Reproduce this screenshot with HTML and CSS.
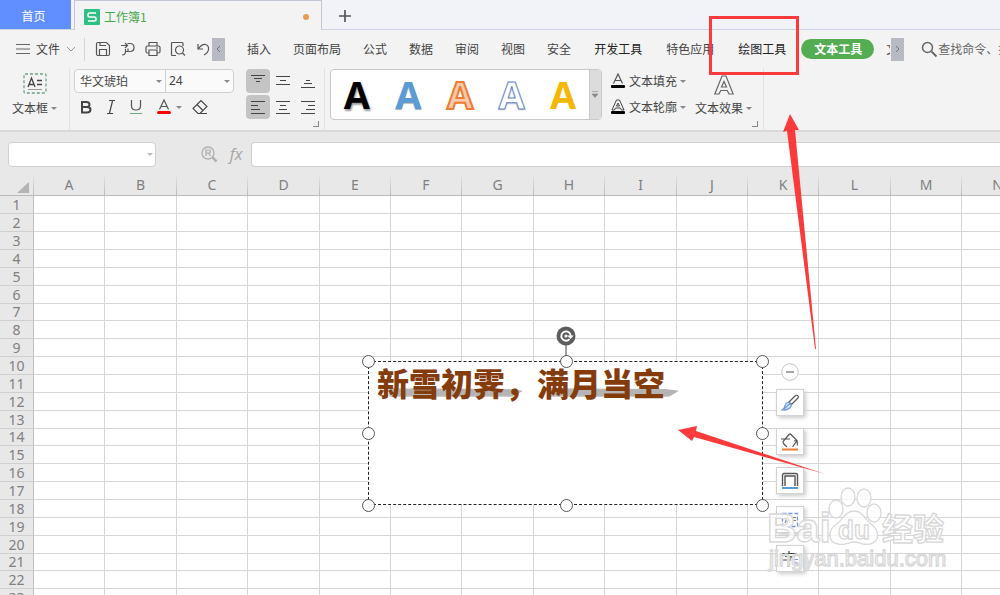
FILE: index.html
```html
<!DOCTYPE html>
<html lang="zh-CN">
<head>
<meta charset="utf-8">
<meta name="viewport" content="width=device-width, initial-scale=1">
<title>工作簿1</title>
<link rel="stylesheet" href="styles.css">
</head>
<body>
<nav class="tabs">
  <button class="tab-home">首页</button>
  <button class="tab-doc">
    <svg class="logo" width="16" height="16" viewBox="0 0 16 16"><rect width="16" height="16" rx="1" fill="#2fc184"/><path d="M12 4H5.500Q4 4 4 6T5.500 8H10.500Q12 8 12 10T10.500 12H4" fill="none" stroke="#fff" stroke-width="1.600"/></svg>
    <span class="tab-name">工作簿1</span>
    <span class="unsaved"></span>
  </button>
  <button class="tab-add" aria-label="新建"><svg width="14" height="14" viewBox="0 0 14 14"><path d="M7 1V13M1 7H13" stroke="#555" stroke-width="1.700"/></svg></button>
</nav>

<div class="menubar">
  <button class="file-menu">
    <svg width="14" height="12" viewBox="0 0 14 12"><path d="M0 1.500H14M0 6H14M0 10.500H14" stroke="#666"/></svg>
    <span>文件</span>
    <svg width="10" height="6" viewBox="0 0 10 6"><path d="M1 1L5 5L9 1" fill="none" stroke="#999"/></svg>
  </button>
  <div class="quick">
    <button aria-label="保存"><svg width="16" height="16" viewBox="0 0 16 16"><path d="M1.500 3Q1.500 1.500 3 1.500H11.500L14.500 4.500V13Q14.500 14.500 13 14.500H3Q1.500 14.500 1.500 13ZM4.500 14V8.500H11.500V14M5 1.500V4.500H11"/></svg></button>
    <button aria-label="输出"><svg width="16" height="16" viewBox="0 0 16 16"><path d="M1 4.500H7M5 2L7.500 4.500L5 7M7.500 2.500H10Q14 2.500 14 6.500T10 10.500H5.500V8M5.500 10.500Q5.500 14 2 14M8 10.500V7.500"/></svg></button>
    <button aria-label="打印"><svg width="16" height="16" viewBox="0 0 16 16"><path d="M4 5V1.500H12V5M4 12H2.500Q1 12 1 10.500V6.500Q1 5 2.500 5H13.500Q15 5 15 6.500V10.500Q15 12 13.500 12H12M4 9H12V14.500H4ZM11 7H13"/></svg></button>
    <button aria-label="打印预览"><svg width="16" height="16" viewBox="0 0 16 16"><path d="M6 14.500H2.500Q1.500 14.500 1.500 13.500V2.500Q1.500 1.500 2.500 1.500H12Q13 1.500 13 2.500V5M12.500 12L15 14.500"/><circle cx="9.500" cy="9" r="4"/></svg></button>
    <button aria-label="撤销"><svg width="16" height="16" viewBox="0 0 16 16"><path d="M3 3V8H8M3.500 7.500Q7 3 10.500 3.500Q14 4.500 13.500 8.500Q13 12 9 14"/></svg></button>
  </div>
  <button class="scroller" aria-label="向左"><svg width="5" height="8" viewBox="0 0 5 8"><path d="M4 1L1 4L4 7" fill="none" stroke="#777"/></svg></button>
  <div class="menu">
    <button>插入</button><button>页面布局</button><button>公式</button><button>数据</button><button>审阅</button><button>视图</button><button>安全</button><button class="wide strong">开发工具</button><button class="wide">特色应用</button><button class="wide strong">绘图工具</button>
  </div>
  <button class="pill">文本工具</button>
  <button class="clipped"><span>文</span></button>
  <button class="scroller" aria-label="向右"><svg width="5" height="8" viewBox="0 0 5 8"><path d="M1 1L4 4L1 7" fill="none" stroke="#777"/></svg></button>
  <label class="search">
    <svg width="17" height="17" viewBox="0 0 17 17"><circle cx="6.500" cy="6.500" r="5" fill="none" stroke="#666" stroke-width="1.500"/><path d="M10.500 10.500L15.500 15.500" stroke="#666" stroke-width="1.800"/></svg>
    <input type="text" placeholder="查找命令、搜索模板" aria-label="查找命令">
  </label>
</div>

<div class="ribbon">
  <button class="textbox-btn">
    <svg width="24" height="22" viewBox="0 0 24 22"><rect x="1" y="1" width="22" height="19" rx="1" fill="none" stroke="#6fa384" stroke-width="1.300" stroke-dasharray="3 2"/><path d="M5 14L8.500 5L12 14M6 11.500H11M14 7.500H19M14 11.500H19" fill="none" stroke="#444" stroke-width="1.300"/><path d="M5 16.500H19" stroke="#999"/></svg>
    <span class="drop">文本框</span>
  </button>

  <div class="group font-group">
    <div class="font-row">
      <label class="combo combo-name"><select aria-label="字体"><option>华文琥珀</option></select></label>
      <label class="combo combo-size"><select aria-label="字号"><option>24</option></select></label>
    </div>
    <div class="format-row">
      <button aria-label="加粗"><svg width="14" height="16" viewBox="0 0 14 16"><path d="M3 3H7.500Q10.500 3 10.500 5.500T7.500 8H3ZM3 8H8Q11.500 8 11.500 10.700T8 13.500H3Z" fill="none" stroke="#444" stroke-width="2"/></svg></button>
      <button aria-label="倾斜"><svg width="14" height="16" viewBox="0 0 14 16"><path d="M5 1.500H11M3 14.500H9M8.500 2L5.500 14" fill="none" stroke="#444" stroke-width="1.200"/></svg></button>
      <button aria-label="下划线"><svg width="14" height="16" viewBox="0 0 14 16"><path d="M2.500 1V7Q2.500 11 7 11T11.500 7V1" fill="none" stroke="#555" stroke-width="1.200"/><path d="M1 14.500H13" stroke="#6fa384"/></svg></button>
      <button class="drop color-btn" aria-label="字体颜色"><svg width="14" height="16" viewBox="0 0 14 16"><path d="M2.500 10.500L7 1L11.500 10.500M4 7.500H10" fill="none" stroke="#555" stroke-width="1.200"/><rect x="0" y="12" width="14" height="3" rx="1.500" fill="#f00"/></svg></button>
      <button aria-label="清除格式"><svg width="16" height="16" viewBox="0 0 16 16"><path d="M1 9.500L9 1.500L15 7.500L8 14.500H6ZM5 5.500L11 11.500M7 14.500H15" fill="none" stroke="#444" stroke-width="1.100"/></svg></button>
    </div>
  </div>

  <div class="group align-group">
    <button class="on" aria-label="顶端对齐"><svg width="14" height="14" viewBox="0 0 14 14"><path d="M0 1.500H14M3 4.500H11M5 7.500H9"/></svg></button>
    <button aria-label="垂直居中"><svg width="14" height="14" viewBox="0 0 14 14"><path d="M0 2.500H14M4 6.500H10M0 10.500H14"/></svg></button>
    <button aria-label="底端对齐"><svg width="14" height="14" viewBox="0 0 14 14"><path d="M5 6.500H9M3 9.500H11M0 13.500H14"/></svg></button>
    <button class="on" aria-label="左对齐"><svg width="14" height="14" viewBox="0 0 14 14"><path d="M0 1.500H14M0 5.500H7M0 9.500H9M0 13.500H14"/></svg></button>
    <button aria-label="居中"><svg width="14" height="14" viewBox="0 0 14 14"><path d="M0 1.500H14M4 5.500H10M3 9.500H11M0 13.500H14"/></svg></button>
    <button aria-label="右对齐"><svg width="14" height="14" viewBox="0 0 14 14"><path d="M0 1.500H14M7 5.500H14M5 9.500H14M0 13.500H14"/></svg></button>
  </div>

  <div class="group art-group">
    <div class="gallery">
      <button class="art art-black">A</button>
      <button class="art art-blue">A</button>
      <button class="art art-orange">A</button>
      <button class="art art-outline">A</button>
      <button class="art art-gold">A</button>
      <button class="gallery-more" aria-label="更多"><svg width="6" height="7" viewBox="0 0 6 7"><path d="M0 .5H6M0 3H6L3 6.500Z" fill="#888" stroke="#888" stroke-width=".6"/></svg></button>
    </div>
    <div class="fill-col">
      <button class="drop"><svg width="14" height="16" viewBox="0 0 14 16"><path d="M2.500 10.500L7 1L11.500 10.500M4 7.500H10" fill="none" stroke="#555" stroke-width="1.200"/><rect y="12" width="14" height="3" rx="1"/></svg>文本填充</button>
      <button class="drop"><svg width="14" height="16" viewBox="0 0 14 16"><path d="M1 11L5.500 1H8.500L13 11H10.500L9.500 9H4.500L3.500 11ZM5.500 7H8.500L7 4Z" fill="none" stroke="#444"/><rect y="12" width="14" height="3" rx="1"/></svg>文本轮廓</button>
    </div>
    <button class="effect-btn">
      <svg width="20" height="20" viewBox="0 0 20 20"><path d="M.8 19L8 1H12L19.200 19H15L13.300 15.500H6.700L5 19ZM7.500 12H12.500L10 6.500Z" fill="none" stroke="#666" stroke-width="1.200"/></svg>
      <span class="drop">文本效果</span>
    </button>
  </div>
</div>

<div class="formula">
  <label class="combo name-box"><input type="text" aria-label="名称框"></label>
  <button class="find" aria-label="浏览"><svg width="17" height="17" viewBox="0 0 17 17"><circle cx="7" cy="7" r="6" fill="none" stroke="#b0b0b0" stroke-width="1.300"/><path d="M5 10V4H8Q9.500 4 9.500 5.500T8 7H5M7.500 7L9.500 10" fill="none" stroke="#aaa" stroke-width="1.200"/><path d="M11.500 11.500L15.500 15.500" stroke="#b0b0b0" stroke-width="2.500"/></svg></button>
  <button class="fx" aria-label="插入函数">fx</button>
  <input class="formula-input" type="text" aria-label="编辑栏">
</div>

<main class="sheet">
  <table class="grid">
    <thead><tr><th class="corner"><svg width="12" height="11" viewBox="0 0 12 11"><path d="M12 0V11H0Z" fill="#b4b4b4"/></svg></th></tr></thead>
    <tbody></tbody>
  </table>

  <div class="shape">
    <p class="word-art"><span>新雪初霁，</span><span>满月当空</span></p>
    <i class="handle tl"></i><i class="handle tc"></i><i class="handle tr"></i>
    <i class="handle ml"></i><i class="handle mr"></i>
    <i class="handle bl"></i><i class="handle bc"></i><i class="handle br"></i>
    <svg class="rotate" width="20" height="30" viewBox="0 0 20 30"><path d="M10 18V30" stroke="#444"/><circle cx="10" cy="10" r="9.500" fill="#5d5d5d"/><path d="M13.500 13.200A4.700 4.700 0 1 1 14.700 10" fill="none" stroke="#fff" stroke-width="1.800"/><path d="M11.200 9.500H17.600L14.600 13Z" fill="#fff"/><circle cx="10" cy="10" r="1.600" fill="#fff"/></svg>
  </div>

  <div class="float-tools">
    <button class="collapse" aria-label="收起"><svg width="18" height="18" viewBox="0 0 18 18"><circle cx="9" cy="9" r="8.300" fill="#fff" stroke="#c4c4c4"/><path d="M5 9H13" stroke="#888" stroke-width="1.500"/></svg></button>
    <button aria-label="样式"><svg width="18" height="18" viewBox="0 0 18 18"><path d="M8 8L14 2Q16 .5 17 2T16 5L10.500 10.500Z" fill="#fff" stroke="#555" stroke-width="1.200"/><path d="M7.500 8L10.500 11Q9 16.500 1 16Q3.500 14.500 4 11.500Q5 8.500 7.500 8ZM3 15L9 9.500" fill="#dce9fb" stroke="#6f98dc" stroke-width="1.200"/></svg></button>
    <button aria-label="填充"><svg width="18" height="18" viewBox="0 0 18 18"><path d="M0 6H9M6 14L2.500 10.500Q1.500 9 2.500 8L8 1.500Q9 .5 10 1.500L16 7.500L11.500 14M16 7.500L16.500 12.500M13 8L16 7.500" fill="none" stroke="#555" stroke-width="1.200"/><path d="M1 16.500H17" stroke="#ed7d31" stroke-width="2"/></svg></button>
    <button aria-label="轮廓"><svg width="18" height="18" viewBox="0 0 18 18"><path d="M1.500 14V3Q1.500 1.500 3 1.500H15Q16.500 1.500 16.500 3V14M4 14V4H14V14" fill="none" stroke="#555" stroke-width="1.400"/><path d="M1 16H17" stroke="#5b9bd5" stroke-width="2"/></svg></button>
    <button aria-label="文本框"><svg width="18" height="18" viewBox="0 0 18 18"><rect x="1.500" y="2.500" width="15" height="13" fill="none" stroke="#6f98dc" stroke-width="1.300" stroke-dasharray="4 2"/><path d="M4 12L6.500 5.500L9 12M5 10H8M11 6.500H15M11 9.500H15" fill="none" stroke="#777"/></svg></button>
    <button aria-label="文字"><svg width="18" height="18" viewBox="0 0 18 18"><path d="M8 1V3M1.500 5.500V3.500H15V5.500M4 6.500H12L8 9V15Q8 16.500 6 16M1 10H10" fill="none" stroke="#444" stroke-width="1.200"/><path d="M11 9.500H17M11 13H17M14 11.500V16" fill="none" stroke="#6f98dc"/></svg></button>
  </div>

  <svg class="watermark" width="182" height="94" viewBox="0 0 182 94">
    <g fill="#fff" fill-opacity=".75" stroke="#d8d8d8" stroke-width="1.300">
      <ellipse cx="69" cy="23" rx="7" ry="9"/>
      <ellipse cx="81" cy="11" rx="7" ry="9"/>
      <ellipse cx="97" cy="12" rx="7" ry="9"/>
      <ellipse cx="107" cy="27" rx="7" ry="9"/>
      <path d="M87 25C79 25 76 33 70 38C61 43 60 56 71 58C78 60 82 56 87 56S97 60 103 58C114 55 112 44 104 38C98 33 95 25 87 25Z"/>
      <text class="wm-large" x="0" y="56">Bai</text>
      <text class="wm-du" x="71" y="53">du</text>
      <text class="wm-cjk" x="115" y="54">经验</text>
      <text class="wm-url" x="2" y="80">jingyan.baidu.com</text>
    </g>
  </svg>
</main>

<svg class="marks" width="180" height="480" viewBox="0 0 180 480">
  <rect x="40.500" y="17.500" width="87" height="56" fill="none" stroke="#fb3b3b" stroke-width="3"/>
  <path d="M120 114L129 130L125 130L146 349H145L117 131L113 132Z" fill="#fb3b3b"/>
  <path d="M8 430L27 426L26 431L155 474L24 437L22 441Z" fill="#fb3b3b"/>
</svg>
<script src="sheet.js"></script>
</body>
</html>
```
FILE: styles.css
```css
* { box-sizing: border-box; }

body {
  margin: 0;
  height: 100vh;
  display: flex;
  flex-direction: column;
  overflow: hidden;
  position: relative;
  background: #e8e8e8;
  color: #444;
  font: 12px/18px "Noto Sans CJK SC", sans-serif;
}

button, input, select {
  font: inherit;
  color: inherit;
  border: 0;
  margin: 0;
  padding: 0;
  background: none;
  white-space: nowrap;
}

svg { display: block; flex: none; }

/* Document tabs */
.tabs {
  display: flex;
  flex: none;
  height: 30px;
  background: #f1f3f9;
  border-bottom: 1px solid #cdd3e2;
}
.tab-home { width: 71px; padding: 3px 4px 0 0; background: #618fff; color: #fff; }
.tab-doc {
  display: flex;
  align-items: center;
  gap: 4px;
  width: 248px;
  height: 30px;
  margin-left: 3px;
  padding: 3px 12px 0 9px;
  background: #f3f3f3;
  border: 1px solid #c3c6d6;
  border-width: 1px 1px 0;
  color: #45a849;
}
.unsaved { width: 6px; height: 6px; margin-left: auto; border-radius: 50%; background: #e69c55; }
.tab-add { padding: 2px 16px 0; }

/* Menu bar */
.menubar {
  display: flex;
  flex: none;
  align-items: center;
  height: 38px;
  background: #f3f3f3;
}
.file-menu {
  display: flex;
  align-items: center;
  height: 23px;
  gap: 6px;
  padding: 0 8px 0 16px;
  border-right: 1px solid #d5d5d5;
}
.quick { display: flex; gap: 9px; margin: 0 1px 0 10px; flex: none; }
.quick path, .quick circle { fill: none; stroke: #555; stroke-width: 1.2; }
.scroller {
  display: grid;
  place-items: center;
  flex: none;
  width: 13px;
  height: 23px;
  background: #b7bac3;
}
.menu { display: flex; flex: none; margin-left: 11px; }
.menu button { padding: 0 11px; }
.menu .wide { padding: 0 12px; }
.strong { color: #222; }
.pill {
  flex: none;
  height: 20px;
  margin-left: 3px;
  padding: 0 12px 0 13px;
  border-radius: 10px;
  background: #54ad52;
  color: #fff;
  font-weight: 700;
}
.clipped { width: 4px; margin: 0 1px 0 12px; overflow: hidden; flex: none; }
.clipped span { display: block; }
.search { display: flex; align-items: center; flex: 1; min-width: 0; padding-left: 17px; }
.search input { width: 100%; min-width: 0; outline: 0; }
.search input::placeholder { color: #666; opacity: 1; }

/* Ribbon */
.ribbon {
  display: flex;
  flex: none;
  height: 64px;
  background: #f3f3f3;
  border-bottom: 2px solid #d9d9d9;
}
.drop { display: flex; align-items: center; gap: 3px; }
.drop::after, .combo::after {
  content: "";
  border: 3px solid transparent;
  border-top: 3px solid #888;
  border-bottom: 0;
}
.textbox-btn, .effect-btn { display: flex; flex-direction: column; align-items: center; }
.textbox-btn { width: 70px; padding-top: 5px; gap: 4px; border-right: 1px solid #e2e2e2; }
.group { position: relative; }
.font-group { padding: 1px 0 0 4px; width: 164px; }
.font-row { display: flex; border: 1px solid #d0d0d0; border-radius: 4px; background: #fafafa; }
.combo { display: flex; align-items: center; padding-right: 3px; }
.combo select { flex: 1; min-width: 0; height: 22px; padding-left: 5px; appearance: none; outline: 0; }
.combo-name { width: 91px; border-right: 1px solid #d0d0d0; }
.combo-size { flex: 1; }
.combo-size select { padding-left: 3px; font-family: "Noto Sans", sans-serif; font-size: 12px; }
.format-row { display: flex; gap: 11px; padding: 6px 0 0 5px; }
.format-row .color-btn { margin: 0 -1px 0 3px; gap: 5px; }

.align-group {
  display: grid;
  grid-template: 24px 24px / 24px 24px 24px;
  gap: 2px 1px;
  width: 91px;
  padding: 1px 0 0 12px;
  border-right: 1px solid #e2e2e2;
}
.align-group button { display: grid; place-items: center; border-radius: 4px; }
.align-group .on { background: #c4c4c4; }
.align-group path { stroke: #444; stroke-width: 1.2; }
.align-group::after, .art-group::after {
  content: "";
  position: absolute;
  right: 5px;
  bottom: 3px;
  width: 5px;
  height: 5px;
  border: solid #888;
  border-width: 0 1px 1px 0;
}

.art-group { display: flex; padding: 1px 11px 0 5px; border-right: 1px solid #e2e2e2; }
.gallery {
  display: flex;
  width: 272px;
  height: 51px;
  border: 1px solid #c9c9c9;
  border-radius: 4px;
  background: #fff;
  overflow: hidden;
}
.art { flex: 1; font: 700 38px/47px "Open Sans", sans-serif; }
.art-black { color: #000; text-shadow: 1px 2px 2px #999; }
.art-blue { color: #5b9bd5; text-shadow: 0 1px 1px #aaa; }
.art-orange { color: #f8cbad; -webkit-text-stroke: 2px #ed7d31; }
.art-outline { color: #fff; -webkit-text-stroke: 1px #6286cb; text-shadow: 0 1px 2px #bbb; }
.art-gold { color: #f5b800; }
.gallery-more { display: grid; place-items: center; width: 12px; background: #dcdcdc; border-left: 1px solid #c9c9c9; }
.fill-col { display: flex; flex-direction: column; gap: 8px; padding: 3px 9px 0; }
.fill-col svg { margin-right: 1px; }
.effect-btn { padding-top: 6px; gap: 4px; }

/* Formula bar */
.formula { display: flex; flex: none; align-items: center; height: 43px; padding: 1px 0 0 8px; }
.name-box, .formula-input { height: 25px; border: 1px solid #d0d0d0; border-radius: 4px; background: #fff; outline: 0; }
.name-box { width: 148px; padding-right: 2px; }
.name-box input { flex: 1; min-width: 0; outline: 0; }
.name-box::after { border-top-color: #bbb; }
.find { margin-left: 45px; }
.fx { width: 36px; margin-right: -3px; color: #a5a5a5; font: italic 16px/22px "Open Sans", sans-serif; }
.formula-input { flex: 1; min-width: 0; border-right: 0; border-radius: 4px 0 0 4px; }

/* Sheet */
.sheet { flex: 1; min-height: 0; position: relative; overflow: hidden; }
.grid {
  border-collapse: separate;
  border-spacing: 0;
  table-layout: fixed;
  width: max-content;
  color: #808080;
  font: 14px/16px "Noto Sans", sans-serif;
}
.grid th, .grid td { padding: 0; }
.grid th { font-weight: 400; background: #e8e8e8; text-align: center; }
.grid thead th {
  width: 71px;
  min-width: 71px;
  height: 21px;
  border-right: 1px solid;
  border-bottom: 1px solid #b8b8b8;
  border-image: linear-gradient(#e8e8e8, #b8b8b8) 1;
}
.grid thead th:nth-child(5n + 3), .grid thead th:nth-child(5n + 5) { width: 72px; min-width: 72px; }
.grid thead .corner { width: 34px; min-width: 34px; }
.corner svg { margin: 4px 0 0 17px; }
.grid tbody th { height: 18px; border-right: 1px solid #c0c0c0; border-bottom: 1px solid #cfcfcf; }
.grid tbody tr:nth-child(7n) th { height: 17px; }
.grid td { background: #fff; border-right: 1px solid #d6d6d6; border-bottom: 1px solid #d6d6d6; }

.shape {
  position: absolute;
  left: 368px;
  top: 186px;
  width: 395px;
  height: 144px;
  background: #fff;
  outline: 1px dashed #222;
  outline-offset: -1px;
}
.word-art {
  display: flex;
  margin: 0;
  padding-left: 9px;
  color: #843c0c;
  font: 900 32px/42px "Noto Sans CJK SC", sans-serif;
}
.word-art span { position: relative; z-index: 0; }
.word-art span::before {
  content: "";
  position: absolute;
  z-index: -1;
  left: 12px;
  right: -14px;
  bottom: 6px;
  height: 9px;
  background: #b4b4b4;
  clip-path: polygon(0 0, 90% 10%, 100% 30%, 92% 100%, 0 100%);
  filter: blur(1px);
}
.word-art span:first-child::before { right: 14px; }
.handle {
  position: absolute;
  width: 13px;
  height: 13px;
  margin: -6px;
  border: 1px solid #555;
  border-radius: 50%;
  background: #fff;
}
.tl, .ml, .bl { left: 0; }
.tc, .bc { left: 50%; }
.tr, .mr, .br { left: 100%; margin-left: -7px; }
.tl, .tc, .tr { top: 0; }
.ml, .mr { top: 50%; }
.bl, .bc, .br { top: 100%; }
.rotate { position: absolute; left: 50%; bottom: 100%; margin: 0 0 5px -10px; }

.float-tools {
  position: absolute;
  left: 776px;
  top: 188px;
  display: flex;
  flex-direction: column;
  align-items: center;
  gap: 12px;
}
.float-tools button {
  display: grid;
  place-items: center;
  width: 28px;
  height: 27px;
  background: #fff;
  border: 1px solid #d2d2d2;
  box-shadow: 2px 2px 4px #ccc;
}
.float-tools .collapse { width: 18px; height: 18px; margin-bottom: -4px; border: 0; border-radius: 50%; box-shadow: none; }

.watermark { position: absolute; left: 767px; top: 311px; }
.wm-large { font: 700 41px "Liberation Sans", sans-serif; }
.wm-du { font: 700 26px "Liberation Sans", sans-serif; }
.wm-cjk { font: 700 31px "Noto Sans CJK SC", sans-serif; }
.wm-url { font: 22px "Liberation Sans", sans-serif; }

.marks { position: absolute; left: 670px; top: 0; pointer-events: none; }
```
FILE: sheet.js
```js
const columns = "ABCDEFGHIJKLMN".split("");
const headRow = document.querySelector(".grid thead tr");
const body = document.querySelector(".grid tbody");

for (const name of columns) {
  const th = document.createElement("th");
  th.scope = "col";
  th.textContent = name;
  headRow.append(th);
}

for (let n = 1; n <= 23; n++) {
  const row = body.insertRow();
  const th = document.createElement("th");
  th.scope = "row";
  th.textContent = n;
  row.append(th);
  columns.forEach(() => row.insertCell());
}
```
